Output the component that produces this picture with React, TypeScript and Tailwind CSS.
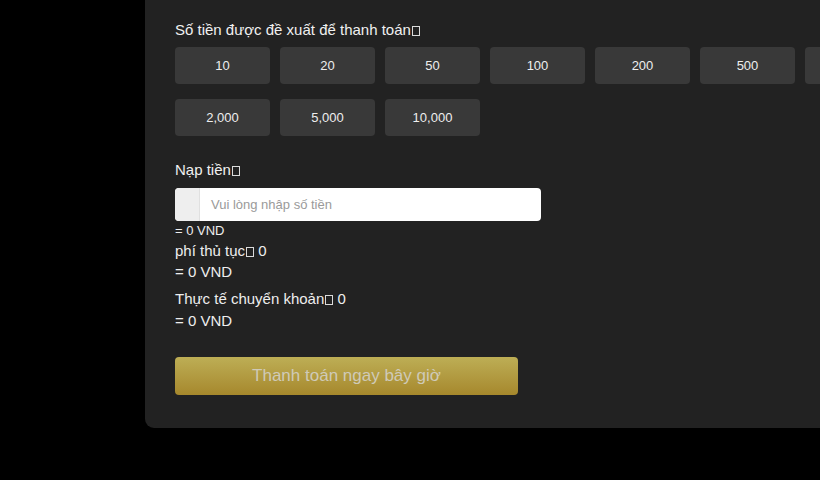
import React from "react";

const Tofu = () => (
  <span className="inline-block w-[8px] h-[10px] border border-current ml-[1px] align-[-1px] opacity-90" />
);

export default function App() {
  const row1 = ["10", "20", "50", "100", "200", "500", ""];
  const row2 = ["2,000", "5,000", "10,000"];
  return (
    <div
      className="w-[820px] h-[480px] overflow-hidden bg-black flex"
      style={{ fontFamily: '"Liberation Sans", Arial, sans-serif' }}
    >
      <div className="ml-[145px] w-[820px] shrink-0 h-[428px] bg-[#222222] rounded-b-[9px] pl-[30px] pt-[20px] text-white">
        <div className="h-[20px] leading-[20px] text-[15px] text-[#f0f0f0]">
          Số tiền được đề xuất để thanh toán<Tofu />
        </div>
        <div className="mt-[7px] flex flex-col gap-[15px]">
          {[row1, row2].map((row, i) => (
            <div key={i} className="flex gap-[10px]">
              {row.map((v, j) => (
                <div
                  key={j}
                  className="w-[95px] h-[37px] shrink-0 rounded-[4px] bg-[#393939] flex items-center justify-center text-[13px] text-[#eeeeee]"
                >
                  {v}
                </div>
              ))}
            </div>
          ))}
        </div>
        <div className="mt-[24px] h-[20px] leading-[20px] text-[15px] text-[#f0f0f0]">
          Nạp tiền<Tofu />
        </div>
        <div className="mt-[8px] w-[366px] h-[33px] flex rounded-[4px] overflow-hidden bg-white">
          <div className="w-[25px] h-full bg-[#eeeeee] border-r border-[#e0e0e0]" />
          <div className="flex-1 flex items-center pl-[11px] text-[13px] text-[#9a9a9a]">
            Vui lòng nhập số tiền
          </div>
        </div>
        <div className="mt-[3px] text-[13px] leading-[14px] text-[#eeeeee]">= 0 VND</div>
        <div className="mt-[2px] text-[15px] leading-[21px] text-[#eeeeee]">
          phí thủ tục<Tofu /> 0
        </div>
        <div className="text-[15px] leading-[21px] text-[#eeeeee]">= 0 VND</div>
        <div className="mt-[6px] text-[15px] leading-[22px] text-[#eeeeee]">
          Thực tế chuyển khoản<Tofu /> 0
        </div>
        <div className="text-[15px] leading-[22px] text-[#eeeeee]">= 0 VND</div>
        <div className="mt-[25px] w-[343px] h-[38px] rounded-[4px] bg-gradient-to-b from-[#bdae55] to-[#a6882c] flex items-center justify-center text-[17px] text-[#cfcab8]">
          Thanh toán ngay bây giờ
        </div>
      </div>
    </div>
  );
}
